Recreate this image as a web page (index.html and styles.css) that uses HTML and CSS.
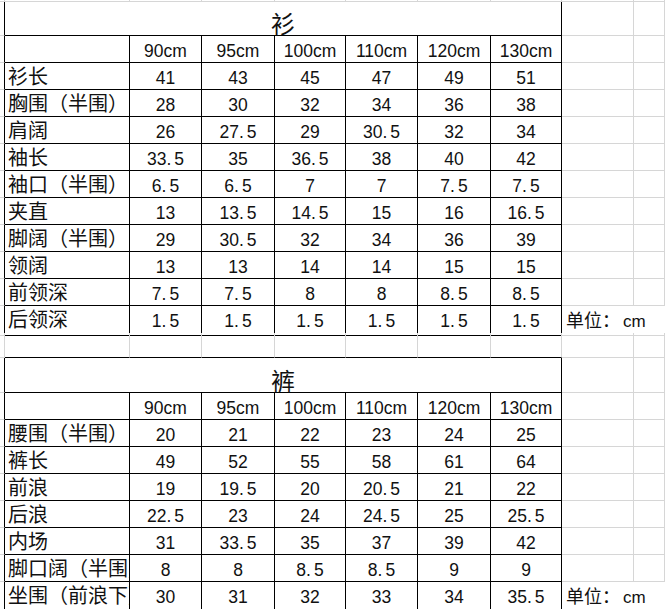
FILE: index.html
```html
<!DOCTYPE html>
<html lang="zh-CN">
<head>
<meta charset="utf-8">
<title>尺码表</title>
<link rel="stylesheet" href="styles.css">
</head>
<body>
<div class="sheet">
  <div class="row row0"><div class="c"></div><div class="c"></div><div class="c"></div><div class="c"></div><div class="c"></div><div class="c"></div><div class="c"></div><div class="c"></div><div class="c"></div><div class="c"></div></div>

  <div class="row rt"><div class="c ek"></div><div class="c k title span7">衫</div><div class="c"></div><div class="c"></div></div>
  <div class="row"><div class="c ek"></div><div class="c k"></div><div class="c k n">90cm</div><div class="c k n">95cm</div><div class="c k n">100cm</div><div class="c k n">110cm</div><div class="c k n">120cm</div><div class="c k n">130cm</div><div class="c"></div><div class="c"></div></div>
  <div class="row"><div class="c ek"></div><div class="c k l">衫长</div><div class="c k n">41</div><div class="c k n">43</div><div class="c k n">45</div><div class="c k n">47</div><div class="c k n">49</div><div class="c k n">51</div><div class="c"></div><div class="c"></div></div>
  <div class="row"><div class="c ek"></div><div class="c k l">胸围（半围）</div><div class="c k n">28</div><div class="c k n">30</div><div class="c k n">32</div><div class="c k n">34</div><div class="c k n">36</div><div class="c k n">38</div><div class="c"></div><div class="c"></div></div>
  <div class="row"><div class="c ek"></div><div class="c k l">肩阔</div><div class="c k n">26</div><div class="c k n">27<span class="pt">.</span>5</div><div class="c k n">29</div><div class="c k n">30<span class="pt">.</span>5</div><div class="c k n">32</div><div class="c k n">34</div><div class="c"></div><div class="c"></div></div>
  <div class="row"><div class="c ek"></div><div class="c k l">袖长</div><div class="c k n">33<span class="pt">.</span>5</div><div class="c k n">35</div><div class="c k n">36<span class="pt">.</span>5</div><div class="c k n">38</div><div class="c k n">40</div><div class="c k n">42</div><div class="c"></div><div class="c"></div></div>
  <div class="row"><div class="c ek"></div><div class="c k l">袖口（半围）</div><div class="c k n">6<span class="pt">.</span>5</div><div class="c k n">6<span class="pt">.</span>5</div><div class="c k n">7</div><div class="c k n">7</div><div class="c k n">7<span class="pt">.</span>5</div><div class="c k n">7<span class="pt">.</span>5</div><div class="c"></div><div class="c"></div></div>
  <div class="row"><div class="c ek"></div><div class="c k l">夹直</div><div class="c k n">13</div><div class="c k n">13<span class="pt">.</span>5</div><div class="c k n">14<span class="pt">.</span>5</div><div class="c k n">15</div><div class="c k n">16</div><div class="c k n">16<span class="pt">.</span>5</div><div class="c"></div><div class="c"></div></div>
  <div class="row"><div class="c ek"></div><div class="c k l">脚阔（半围）</div><div class="c k n">29</div><div class="c k n">30<span class="pt">.</span>5</div><div class="c k n">32</div><div class="c k n">34</div><div class="c k n">36</div><div class="c k n">39</div><div class="c"></div><div class="c"></div></div>
  <div class="row"><div class="c ek"></div><div class="c k l">领阔</div><div class="c k n">13</div><div class="c k n">13</div><div class="c k n">14</div><div class="c k n">14</div><div class="c k n">15</div><div class="c k n">15</div><div class="c"></div><div class="c"></div></div>
  <div class="row"><div class="c ek"></div><div class="c k l">前领深</div><div class="c k n">7<span class="pt">.</span>5</div><div class="c k n">7<span class="pt">.</span>5</div><div class="c k n">8</div><div class="c k n">8</div><div class="c k n">8<span class="pt">.</span>5</div><div class="c k n">8<span class="pt">.</span>5</div><div class="c"></div><div class="c"></div></div>
  <div class="row"><div class="c ek"></div><div class="c k l">后领深</div><div class="c k n">1<span class="pt">.</span>5</div><div class="c k n">1<span class="pt">.</span>5</div><div class="c k n">1<span class="pt">.</span>5</div><div class="c k n">1<span class="pt">.</span>5</div><div class="c k n">1<span class="pt">.</span>5</div><div class="c k n">1<span class="pt">.</span>5</div><div class="c unit span2">单位：<span class="cm">cm</span></div></div>

  <div class="row rs"><div class="c"></div><div class="c kb"></div><div class="c kb"></div><div class="c kb"></div><div class="c kb"></div><div class="c kb"></div><div class="c kb"></div><div class="c kb"></div><div class="c"></div><div class="c"></div></div>

  <div class="row rt2"><div class="c ek"></div><div class="c k title span7">裤</div><div class="c"></div><div class="c"></div></div>
  <div class="row"><div class="c ek"></div><div class="c k"></div><div class="c k n">90cm</div><div class="c k n">95cm</div><div class="c k n">100cm</div><div class="c k n">110cm</div><div class="c k n">120cm</div><div class="c k n">130cm</div><div class="c"></div><div class="c"></div></div>
  <div class="row"><div class="c ek"></div><div class="c k l">腰围（半围）</div><div class="c k n">20</div><div class="c k n">21</div><div class="c k n">22</div><div class="c k n">23</div><div class="c k n">24</div><div class="c k n">25</div><div class="c"></div><div class="c"></div></div>
  <div class="row"><div class="c ek"></div><div class="c k l">裤长</div><div class="c k n">49</div><div class="c k n">52</div><div class="c k n">55</div><div class="c k n">58</div><div class="c k n">61</div><div class="c k n">64</div><div class="c"></div><div class="c"></div></div>
  <div class="row"><div class="c ek"></div><div class="c k l">前浪</div><div class="c k n">19</div><div class="c k n">19<span class="pt">.</span>5</div><div class="c k n">20</div><div class="c k n">20<span class="pt">.</span>5</div><div class="c k n">21</div><div class="c k n">22</div><div class="c"></div><div class="c"></div></div>
  <div class="row"><div class="c ek"></div><div class="c k l">后浪</div><div class="c k n">22<span class="pt">.</span>5</div><div class="c k n">23</div><div class="c k n">24</div><div class="c k n">24<span class="pt">.</span>5</div><div class="c k n">25</div><div class="c k n">25<span class="pt">.</span>5</div><div class="c"></div><div class="c"></div></div>
  <div class="row"><div class="c ek"></div><div class="c k l">内场</div><div class="c k n">31</div><div class="c k n">33<span class="pt">.</span>5</div><div class="c k n">35</div><div class="c k n">37</div><div class="c k n">39</div><div class="c k n">42</div><div class="c"></div><div class="c"></div></div>
  <div class="row"><div class="c ek"></div><div class="c k l clip">脚口阔（半围）</div><div class="c k n">8</div><div class="c k n">8</div><div class="c k n">8<span class="pt">.</span>5</div><div class="c k n">8<span class="pt">.</span>5</div><div class="c k n">9</div><div class="c k n">9</div><div class="c"></div><div class="c"></div></div>
  <div class="row"><div class="c ek"></div><div class="c k l clip">坐围（前浪下）</div><div class="c k n">30</div><div class="c k n">31</div><div class="c k n">32</div><div class="c k n">33</div><div class="c k n">34</div><div class="c k n">35<span class="pt">.</span>5</div><div class="c unit span2">单位：<span class="cm">cm</span></div></div>
</div>
</body>
</html>
```

FILE: styles.css
```css
html, body {
  margin: 0;
  padding: 0;
  background: #ffffff;
}

body {
  width: 665px;
  height: 609px;
  overflow: hidden;
  font-family: "Noto Sans CJK SC", "Noto Sans", sans-serif;
  color: #111111;
}

.sheet {
  display: flex;
  flex-direction: column;
}

.row {
  display: grid;
  grid-template-columns: 5px 125px 72px 73px 71px 72px 73px 71px 72px 1fr;
  height: 27px;
}

.row0 { height: 2px; }
.rt { height: 34px; }
.rt2 { height: 35px; }
.rs { height: 25px; }

.c {
  box-sizing: border-box;
  min-width: 0;
  border-right: 1px solid #d6d6d6;
  border-bottom: 1px solid #d6d6d6;
  white-space: nowrap;
}

.k {
  border-right-color: #000000;
  border-bottom-color: #000000;
}

.ek { border-right-color: #000000; }
.kb { border-bottom-color: #000000; }

.span7 { grid-column: span 7; }
.span2 { grid-column: span 2; border-right-color: transparent; }

.title {
  text-align: center;
  font-size: 24px;
  line-height: 24px;
  padding-top: 9px;
}

.rt2 .title { padding-top: 10px; }

.l {
  font-size: 20px;
  line-height: 26px;
  padding-left: 3px;
}

.clip { overflow: hidden; }

.n {
  font-family: "Liberation Sans", Arial, sans-serif;
  font-size: 17.5px;
  line-height: 22px;
  padding-top: 4px;
  text-align: center;
}

.pt { margin-right: 3px; }

.unit {
  font-size: 18px;
  line-height: 26px;
  padding-left: 4px;
}

.cm {
  font-family: "Liberation Sans", Arial, sans-serif;
  font-size: 17px;
  margin-left: 3px;
}
```
